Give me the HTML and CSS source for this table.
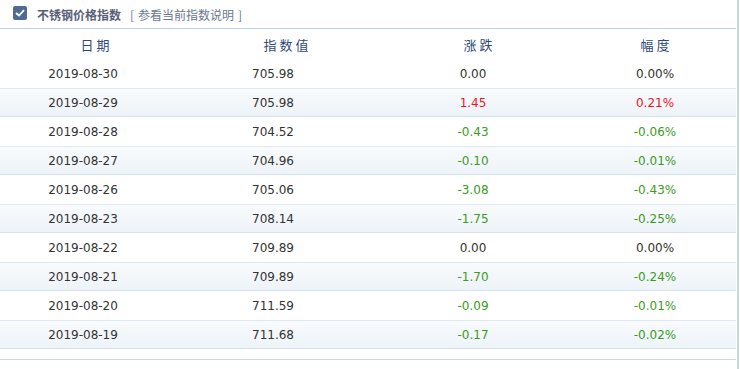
FILE: index.html
```html
<!DOCTYPE html>
<html lang="zh-CN">
<head>
    <meta charset="UTF-8">
    <title>不锈钢价格指数</title>
    <link rel="stylesheet" href="styles.css">
</head>
<body>
    <div class="index-panel">
        <div class="panel-title">
            <span class="check-box">
                <svg width="10" height="8" viewBox="0 0 10 8"><path d="M1 4 L4 6.5 L9 1.2" fill="none" stroke="#fff" stroke-width="1.8"/></svg>
            </span>
            <span class="title-text">不锈钢价格指数</span>
            <a class="title-link" href="#"><span class="bracket">[</span>参看当前指数说明<span class="bracket">]</span></a>
        </div>
        <div class="table-head">
            <span>日期</span>
            <span>指数值</span>
            <span>涨跌</span>
            <span>幅度</span>
        </div>
        <div class="table-body" id="rows"></div>
        <div class="table-foot"></div>
    </div>
    <script>
        const data = [
            ["2019-08-30", "705.98", "0.00", "0.00%"],
            ["2019-08-29", "705.98", "1.45", "0.21%"],
            ["2019-08-28", "704.52", "-0.43", "-0.06%"],
            ["2019-08-27", "704.96", "-0.10", "-0.01%"],
            ["2019-08-26", "705.06", "-3.08", "-0.43%"],
            ["2019-08-23", "708.14", "-1.75", "-0.25%"],
            ["2019-08-22", "709.89", "0.00", "0.00%"],
            ["2019-08-21", "709.89", "-1.70", "-0.24%"],
            ["2019-08-20", "711.59", "-0.09", "-0.01%"],
            ["2019-08-19", "711.68", "-0.17", "-0.02%"]
        ];

        const rows = document.getElementById('rows');
        data.forEach((item, i) => {
            const change = parseFloat(item[2]);
            let cls = '';
            if (change > 0) cls = 'up';
            if (change < 0) cls = 'down';
            const row = document.createElement('div');
            row.className = 'table-row' + (i % 2 === 1 ? ' alt' : '');
            row.innerHTML =
                `<span>${item[0]}</span>` +
                `<span>${item[1]}</span>` +
                `<span class="${cls}">${item[2]}</span>` +
                `<span class="${cls}">${item[3]}</span>`;
            rows.appendChild(row);
        });
    </script>
</body>
</html>
```

FILE: styles.css
```css
body {
    margin: 0;
    background: #fff;
    font-family: "DejaVu Sans", "Noto Sans CJK SC", sans-serif;
    font-size: 12px;
    color: #333;
}
.index-panel {
    width: 737px;
    height: 369px;
    border-right: 2px solid #c2d7f1;
}
.panel-title {
    height: 29px;
    border-bottom: 1px solid #b9d0ee;
    display: flex;
    align-items: center;
    padding-left: 13px;
    box-sizing: border-box;
    margin-right: 1px;
}
.check-box {
    width: 14px;
    height: 14px;
    border-radius: 2px;
    background: #4f6b94;
    display: flex;
    align-items: center;
    justify-content: center;
    margin-right: 10px;
    margin-top: -2px;
}
.title-text {
    font-family: "Noto Sans CJK SC", sans-serif;
    font-weight: bold;
    color: #5a5f78;
    margin-right: 9px;
}
.title-link {
    font-family: "Noto Sans CJK SC", sans-serif;
    color: #6a7890;
    text-decoration: none;
}
.title-link .bracket {
    margin: 0 4px;
}
.title-link .bracket:first-child {
    margin-left: 0;
}
.table-head {
    display: grid;
    grid-template-columns: 190px 192px 192px 162px;
    height: 30px;
    align-items: center;
    font-family: "Noto Sans CJK SC", sans-serif;
    font-size: 13px;
    color: #2e4a78;
    letter-spacing: 3px;
    text-align: center;
}
.table-head span {
    padding-left: 3px;
}
.table-row {
    display: grid;
    grid-template-columns: 166px 214px 186px 170px;
    height: 29px;
    align-items: center;
    text-align: center;
    box-sizing: border-box;
    margin-right: 1px;
}
.table-row span:last-child {
    padding-left: 8px;
}
.table-row.alt {
    background: linear-gradient(180deg, #f9fbfd 0%, #edf3f8 100%);
    border-top: 1px solid #dce8f3;
    border-bottom: 1px solid #d3e2ef;
}
.up { color: #f0141e; }
.down { color: #3c9a1c; }
.table-foot {
    margin-top: 10px;
    margin-right: 1px;
    border-top: 1px solid #cdd6de;
}
```
